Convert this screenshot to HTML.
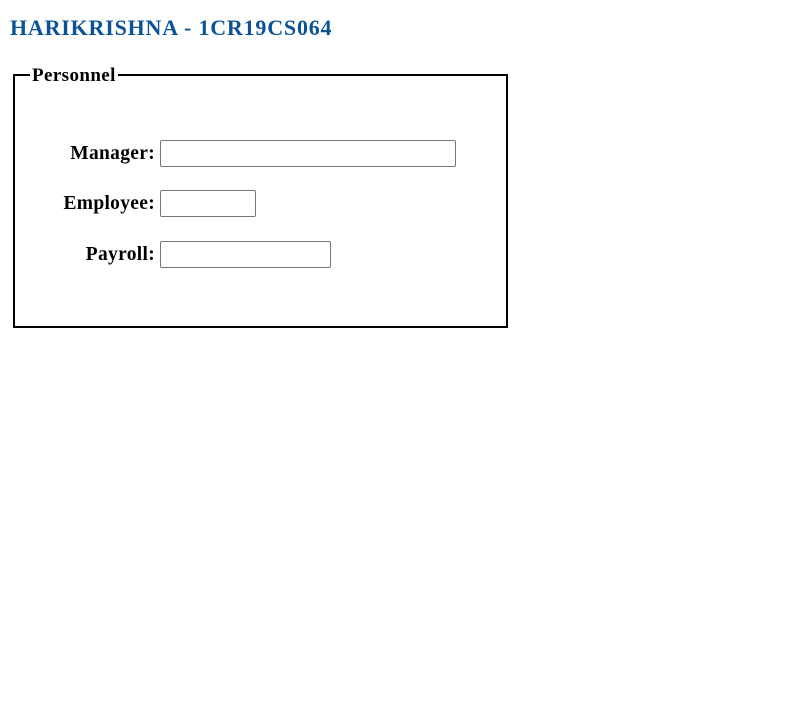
<!DOCTYPE html>
<html><head><style>
body{margin:0;background:#fff;font-family:"Liberation Serif",serif;}
.a{position:absolute;}
h1{position:absolute;left:10px;top:14px;margin:0;font-size:22px;letter-spacing:0.8px;font-weight:bold;color:#0b5394;line-height:28px;}
.fs{left:13px;top:74px;width:491px;height:250px;border:2px solid #000;}
.lg{left:30px;top:66px;background:#fff;padding:0 2px;font-weight:bold;font-size:19px;letter-spacing:0.4px;line-height:20px;}
.lb{width:145px;left:10px;text-align:right;font-weight:bold;font-size:19.5px;letter-spacing:0.3px;line-height:24px;}
.in{left:160px;border:1px solid #767676;border-radius:2px;box-sizing:border-box;height:27px;}
</style></head><body>
<h1>HARIKRISHNA - 1CR19CS064</h1>
<div class="a fs"></div>
<div class="a lg">Personnel</div>
<div class="a lb" style="top:142px">Manager:</div>
<div class="a in" style="top:140px;width:296px"></div>
<div class="a lb" style="top:192px">Employee:</div>
<div class="a in" style="top:190px;width:96px"></div>
<div class="a lb" style="top:243px">Payroll:</div>
<div class="a in" style="top:241px;width:171px"></div>
</body></html>
